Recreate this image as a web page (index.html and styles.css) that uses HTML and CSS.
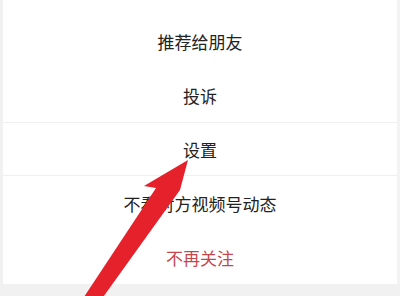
FILE: index.html
```html
<!DOCTYPE html>
<html lang="zh-CN">
<head>
<meta charset="utf-8">
<link rel="stylesheet" href="styles.css">
</head>
<body>
<div class="screen">
  <div class="sheet">
    <div class="top-gap"></div>
    <div class="item">推荐给朋友</div>
    <div class="item">投诉</div>
    <div class="item line-top line-bottom">设置</div>
    <div class="item">不看对方视频号动态</div>
    <div class="item danger">不再关注</div>
  </div>
  <div class="bottom-band"></div>
  <svg class="arrow" width="400" height="296" viewBox="0 0 400 296">
    <polygon points="188,160 144,186 156,188 82,300 101,300 180,190" fill="#e5212b"/>
  </svg>
</div>
</body>
</html>
```

FILE: styles.css
```css
html, body {
  margin: 0;
  padding: 0;
  background: #ffffff;
}

.screen {
  position: relative;
  width: 400px;
  height: 296px;
  overflow: hidden;
  background: #ffffff;
  display: flex;
  flex-direction: column;
  font-family: "Noto Sans CJK SC", "Noto Sans", sans-serif;
}

.sheet {
  flex: 1;
  display: flex;
  flex-direction: column;
  border-left: 3px solid #f1f1f1;
  border-right: 3px solid #f3f3f3;
}

.top-gap {
  height: 14px;
}

.item {
  height: 54px;
  display: flex;
  align-items: center;
  justify-content: center;
  font-size: 17px;
  color: #222222;
  letter-spacing: 0;
}

.line-top {
  border-top: 1px solid #efefef;
  height: 53px;
}

.line-bottom {
  border-bottom: 1px solid #efefef;
  height: 52px;
}

.danger {
  color: #c4474c;
}

.bottom-band {
  height: 12px;
  background: #f1f1f1;
}

.arrow {
  position: absolute;
  left: 0;
  top: 0;
}
```
